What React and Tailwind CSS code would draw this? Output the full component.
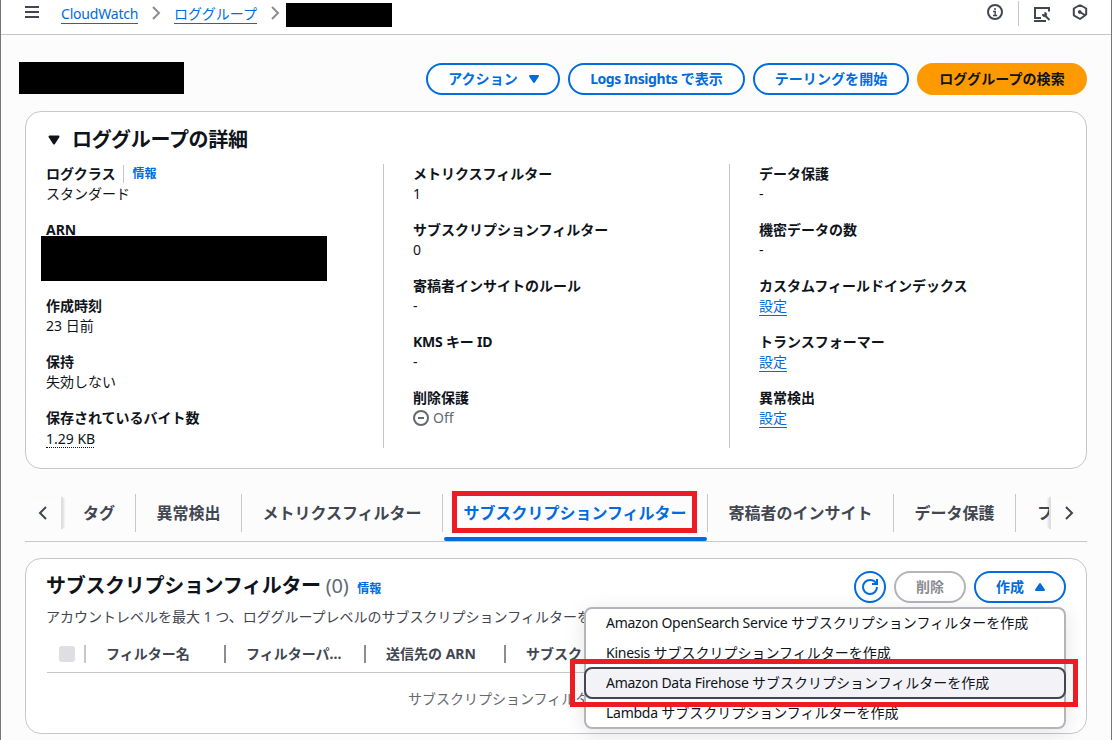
import React from 'react';

const columns = [
    [
        { label: 'ログクラス', value: 'スタンダード', info: true },
        { label: 'ARN', masked: true },
        { label: '作成時刻', value: '23 日前' },
        { label: '保持', value: '失効しない' },
        { label: '保存されているバイト数', value: '1.29 KB', dotted: true },
    ],
    [
        { label: 'メトリクスフィルター', value: '1' },
        { label: 'サブスクリプションフィルター', value: '0' },
        { label: '寄稿者インサイトのルール', value: '-' },
        { label: 'KMS キー ID', value: '-', tight: true },
        { label: '削除保護', value: 'Off', off: true },
    ],
    [
        { label: 'データ保護', value: '-' },
        { label: '機密データの数', value: '-' },
        { label: 'カスタムフィールドインデックス', value: '設定', link: true },
        { label: 'トランスフォーマー', value: '設定', link: true },
        { label: '異常検出', value: '設定', link: true },
    ],
];

const tabs = [
    { label: 'タグ', width: 'w-[73px]' },
    { label: '異常検出', width: 'w-[106px]' },
    { label: 'メトリクスフィルター', width: 'w-[201px]' },
    { label: 'サブスクリプションフィルター', width: 'w-[265px]', active: true },
    { label: '寄稿者のインサイト', width: 'w-[186px]' },
    { label: 'データ保護', width: 'w-[122px]' },
];

const menuItems = ['Amazon OpenSearch Service', 'Kinesis', 'Amazon Data Firehose', 'Lambda'];

const headers = ['フィルター名', 'フィルターパ...', '送信先の ARN', 'サブスク'];

function Chevron({ className, left, size = 16 }) {
    return (
        <svg width={size} height={size} viewBox="0 0 16 16" fill="none" stroke="currentColor" strokeWidth="2" className={className}>
            <path d={left ? 'M11 2 5 8l6 6' : 'M5 2l6 6-6 6'} />
        </svg>
    );
}

function Caret({ up, className }) {
    return (
        <svg width="16" height="16" viewBox="0 0 16 16" fill="currentColor" stroke="currentColor" strokeWidth="2" strokeLinejoin="round" className={className}>
            <path d={up ? 'M4 11h8L8 5z' : 'M4 5h8l-4 6z'} />
        </svg>
    );
}

function TopBar() {
    return (
        <header className="flex h-[35px] border-b border-[#c6c6cd] bg-white text-[#424650]">
            <svg width="16" height="16" viewBox="0 0 16 16" stroke="currentColor" strokeWidth="2" className="ml-[23px] mt-1">
                <path d="M1 3h14M1 8h14M1 13h14" />
            </svg>
            <nav className="ml-[21px] flex h-5 mt-1 text-[#006ce0] leading-5">
                <a className="h-5 w-[77px] whitespace-nowrap border-b border-[#006ce0] tracking-[-0.2px]">CloudWatch</a>
                <Chevron className="ml-[10px] mt-[1px] text-[#8c8c94]" />
                <a className="ml-[10px] h-5 w-[83px] whitespace-nowrap border-b border-[#006ce0]">ロググループ</a>
                <Chevron className="ml-[10px] mt-[1px] text-[#8c8c94]" />
            </nav>
            <div className="ml-[3px] mt-[3px] h-6 w-[106px] bg-black" />
            <div className="ml-auto mr-[23px] flex">
                <svg width="16" height="16" viewBox="0 0 16 16" fill="none" stroke="currentColor" strokeWidth="2" className="mt-1">
                    <circle cx="8" cy="8" r="7" />
                    <path d="M6 7.5h2.2v4M6 11.5h4.2M7 5h2" strokeWidth="1.4" />
                </svg>
                <span className="ml-[15px] mt-[1px] h-[25px] w-px bg-[#c6c6cd]" />
                <svg width="18" height="18" viewBox="0 0 18 18" fill="none" stroke="currentColor" strokeWidth="2" className="ml-[14px] mt-[5px]">
                    <path d="M8 13H2V3h14v3.5M1 16h12" />
                    <path d="M12 10.5l4.5 4.5" />
                    <path d="M11.8 7.3v2.2H9.3a2.2 2.2 0 1 0 2.5-2.2z" strokeWidth="0.8" fill="currentColor" />
                </svg>
                <svg width="16" height="16" viewBox="0 0 16 16" fill="none" stroke="currentColor" strokeWidth="2" className="ml-[21px] mt-1">
                    <path d="M8 1l6.2 3.5v5.8L12.6 11 8 8M14 10.8 8 15l-6.2-3.7V4.5L8 1" strokeLinejoin="round" />
                    <circle cx="7.7" cy="8" r="1.4" fill="currentColor" strokeWidth="1" />
                </svg>
            </div>
        </header>
    );
}

function Button({ children, className }) {
    return (
        <button className={`flex h-8 items-center justify-center whitespace-nowrap rounded-full border-2 font-bold leading-5 tracking-[0.005em] ${className}`}>
            {children}
        </button>
    );
}

function Field({ field }) {
    return (
        <div>
            <div className={`flex h-5 items-center font-bold ${field.tight ? 'tracking-[-0.2px]' : ''}`}>
                {field.label}
                {field.info && (
                    <a className="ml-2 border-l border-[#c6c6cd] pl-2 text-xs leading-[18px] text-[#006ce0]">情報</a>
                )}
            </div>
            {field.masked ? (
                <div className="relative h-10">
                    <div className="absolute -left-[5px] -top-1 h-[45px] w-[286px] bg-black" />
                </div>
            ) : (
                <div className="flex h-5 items-center">
                    {field.off && (
                        <svg width="16" height="16" viewBox="0 0 16 16" fill="none" stroke="#656871" strokeWidth="2" className="mr-1">
                            <circle cx="8" cy="8" r="7" />
                            <path d="M5 8h6" />
                        </svg>
                    )}
                    {field.link ? (
                        <a className="h-5 border-b border-[#006ce0] text-[#006ce0]">{field.value}</a>
                    ) : field.dotted ? (
                        <span className="h-[19px] w-[48px] whitespace-nowrap border-b border-dotted border-[#0f141a] leading-[19px]">{field.value}</span>
                    ) : (
                        <span className={field.off ? 'text-[#656871]' : ''}>{field.value}</span>
                    )}
                </div>
            )}
        </div>
    );
}

function Details() {
    return (
        <section className="ml-6 mt-4 h-[358px] w-[1062px] rounded-2xl border border-[#c6c6cd] bg-white pl-5">
            <h2 className="flex h-[52px] items-center pt-1 text-xl font-bold leading-6 tracking-[-0.015em]">
                <Caret className="mr-[10px] scale-110" />
                ロググループの詳細
            </h2>
            <div className="flex h-[284px]">
                {columns.map((fields, i) => (
                    <div
                        key={i}
                        className={`flex flex-col gap-4 ${i === 0 ? 'w-[337px]' : i === 1 ? 'w-[346px] border-l border-[#c6c6cd] pl-[29px]' : 'border-l border-[#c6c6cd] pl-[29px]'}`}
                    >
                        {fields.map((field) => <Field key={field.label} field={field} />)}
                    </div>
                ))}
            </div>
        </section>
    );
}

function Tabs() {
    return (
        <div className="ml-6 mt-[25px] flex h-12 w-[1062px] border-b border-[#c6c6cd] text-base font-bold text-[#424650]">
            <div className="mt-[3px] flex h-8 w-[38px] items-center border-r-2 border-[#dedee3] pl-[10px] shadow-[2px_0_2px_-1px_rgba(0,0,0,0.12)]">
                <Chevron left />
            </div>
            {tabs.map((tab) => (
                <div key={tab.label} className={`relative h-[38px] shrink-0 border-r border-[#c6c6cd] ${tab.width}`}>
                    <div className={`flex h-[38px] items-center justify-center whitespace-nowrap ${tab.active ? 'text-[#006ce0]' : ''}`}>
                        {tab.label}
                    </div>
                    {tab.active && (
                        <>
                            <span className="absolute left-px right-0 top-[43px] h-1 rounded-[2px] bg-[#006ce0]" />
                            <span className="absolute -top-[3px] left-[9px] h-[42px] w-[245px] border-[5px] border-[#ed1c24]" />
                        </>
                    )}
                </div>
            ))}
            <div className="flex h-[38px] w-[33px] items-center overflow-hidden whitespace-nowrap pl-[21px]">フ</div>
            <div className="mt-[3px] flex h-8 items-center border-l-2 border-[#dedee3] bg-[#fcfcfd] pl-[10px] shadow-[-2px_0_2px_-1px_rgba(0,0,0,0.12)]">
                <Chevron />
            </div>
        </div>
    );
}

function CreateMenu() {
    return (
        <div className="absolute left-[558px] top-[48px] h-[122px] w-[482px] rounded-lg border-2 border-[#b4b4bb] bg-white shadow-[0_4px_20px_1px_rgba(0,7,22,0.1)]">
            {menuItems.map((item, i) => (
                <div key={item} className="relative flex h-[30px] items-center whitespace-nowrap pl-5 first:mt-[-1px]">
                    {i === 2 && (
                        <span className="absolute -left-0.5 -right-0.5 -top-px h-8 rounded-lg border-2 border-[#424650] bg-[#f3f3f7]" />
                    )}
                    <span className="relative">
                        <span className="tracking-[-0.26px]">{item} </span>
                        サブスクリプションフィルターを作成
                    </span>
                </div>
            ))}
            <div className="absolute -left-4 top-[50px] h-12 w-[508px] border-[5px] border-[#ed1c24]" />
        </div>
    );
}

function Filters() {
    return (
        <section className="relative ml-6 mt-4 h-[176px] w-[1062px] rounded-2xl border border-[#c6c6cd] bg-white pl-5 pr-5">
            <div className="flex pt-3">
                <h2 className="flex h-[30px] items-center whitespace-nowrap text-xl font-bold leading-6 tracking-[-0.015em]">
                    サブスクリプションフィルター
                    <span className="ml-[5px] font-normal text-[#656871]">(0)</span>
                    <a className="ml-[9px] mt-[5px] text-xs leading-4 tracking-normal text-[#006ce0]">情報</a>
                </h2>
                <div className="ml-auto flex gap-2">
                    <Button className="w-8 border-[#006ce0] text-[#006ce0]">
                        <svg width="16" height="16" viewBox="0 0 16 16" fill="none" stroke="currentColor" strokeWidth="2">
                            <path d="M15 0v5h-5" />
                            <path d="M15 8a7 7 0 1 1-7-7c2.8 0 5.2 1.5 6.5 3.8" />
                        </svg>
                    </Button>
                    <Button className="w-[72px] border-[#b4b4bb] text-[#8c8c94]">削除</Button>
                    <Button className="w-[92px] border-[#006ce0] pl-1 text-[#006ce0]">
                        作成
                        <Caret up className="ml-2" />
                    </Button>
                </div>
            </div>
            <p className="mt-1 h-5 w-[560px] overflow-hidden whitespace-nowrap text-[#424650]">
                アカウントレベルを最大 1 つ、ロググループレベルのサブスクリプションフィルターを
            </p>
            <div className="ml-px mt-2 flex h-[38px] items-center border-b border-[#c6c6cd] font-bold text-[#424650]">
                <span className="ml-3 h-4 w-4 rounded-[3px] bg-[#dedee3]" />
                <span className="ml-[9px] h-[18px] w-0.5 bg-[#c6c6cd]" />
                {headers.map((header, i) => (
                    <div
                        key={header}
                        className={`flex h-[18px] w-[140px] items-center whitespace-nowrap pl-[20px] ${i < 3 ? 'border-r-2 border-[#8c8c94]' : ''}`}
                    >
                        {header}
                    </div>
                ))}
            </div>
            <p className="ml-[362px] mt-4 w-[190px] overflow-hidden whitespace-nowrap text-[#656871]">サブスクリプションフィルター</p>
            <CreateMenu />
        </section>
    );
}

export default function App() {
    return (
        <div className="h-[740px] w-[1112px] overflow-hidden border-x border-[#76767a] bg-[#fcfcfd] font-['Noto_Sans','Noto_Sans_CJK_JP',sans-serif] text-sm leading-5 text-[#0f141a]">
            <TopBar />
            <div className="mt-7 flex h-8 items-center gap-2 pl-[18px] pr-6">
                <div className="-mt-0.5 h-8 w-[165px] bg-black" />
                <Button className="ml-auto w-[134px] border-[#006ce0] bg-white pl-1 text-[#006ce0]">
                    アクション
                    <Caret className="ml-2" />
                </Button>
                <Button className="w-[177px] border-[#006ce0] bg-white text-[#006ce0]">
                    <span className="whitespace-pre tracking-[-0.43px]">Logs Insights </span>で表示
                </Button>
                <Button className="w-[156px] border-[#006ce0] bg-white text-[#006ce0]">テーリングを開始</Button>
                <Button className="w-[170px] border-[#ff9900] bg-[#ff9900]">ロググループの検索</Button>
            </div>
            <Details />
            <Tabs />
            <Filters />
        </div>
    );
}
